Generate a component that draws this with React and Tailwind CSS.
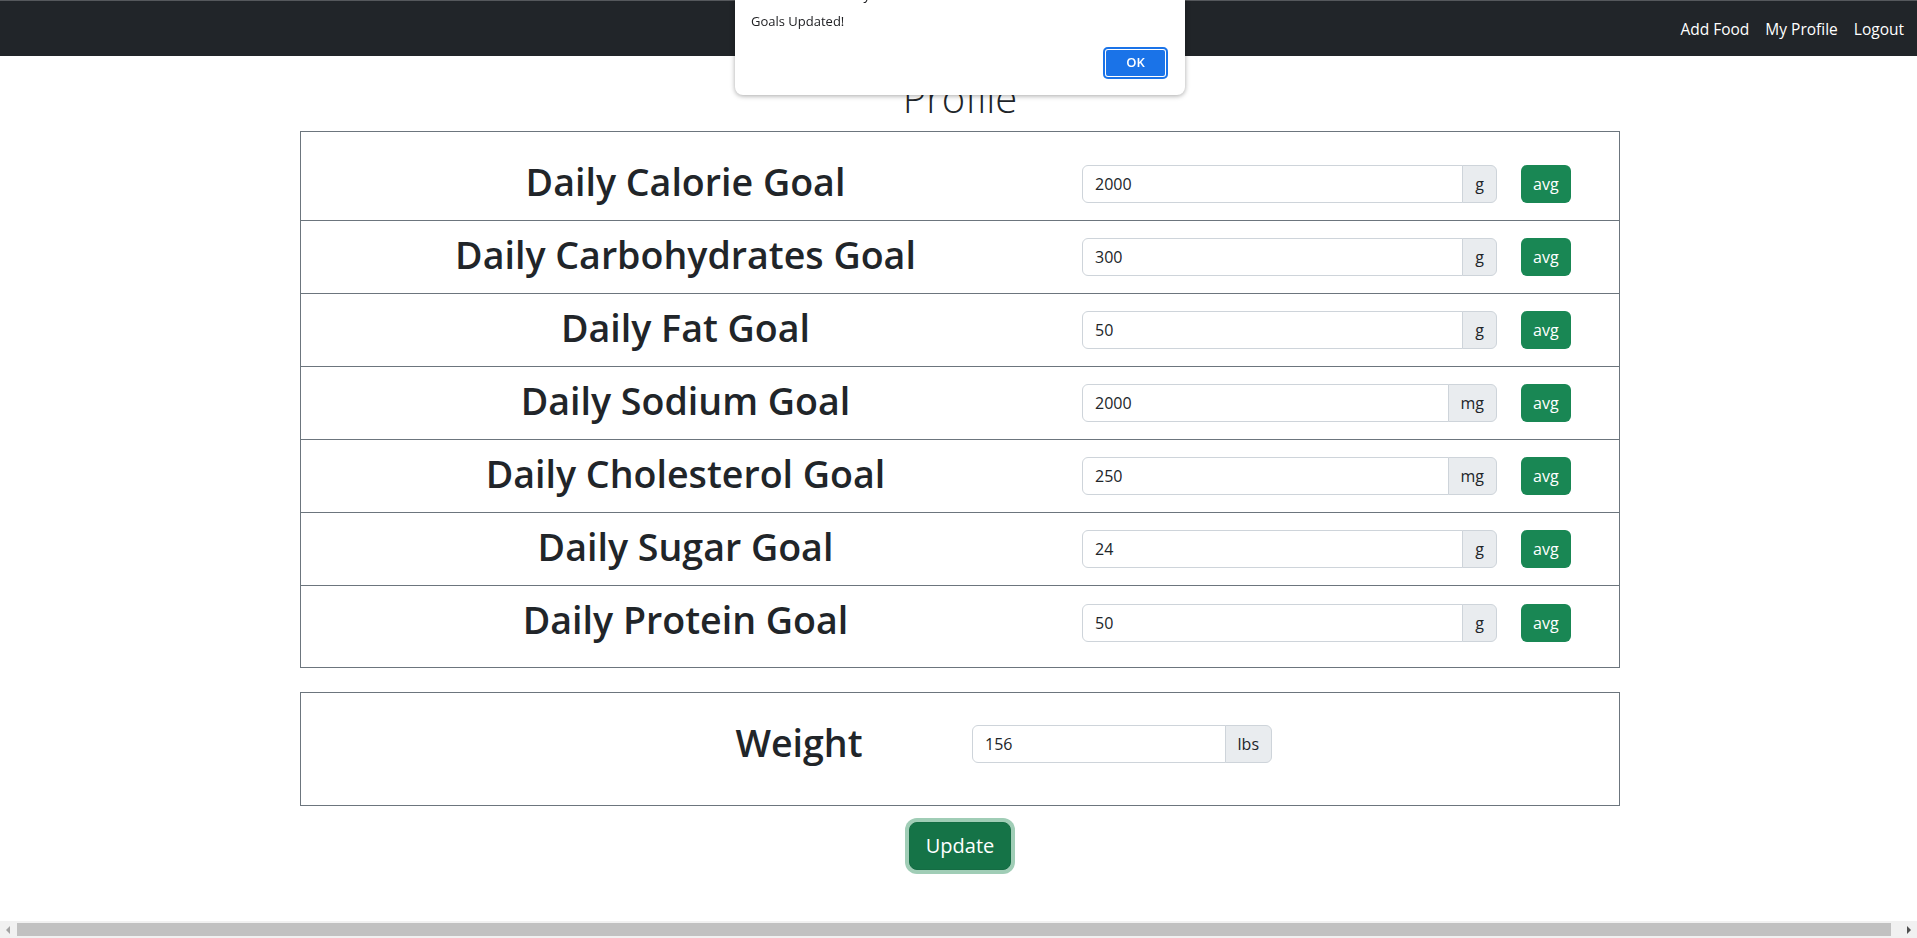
import React from "react";

const goals = [
  { label: "Daily Calorie Goal", value: "2000", unit: "g" },
  { label: "Daily Carbohydrates Goal", value: "300", unit: "g" },
  { label: "Daily Fat Goal", value: "50", unit: "g" },
  { label: "Daily Sodium Goal", value: "2000", unit: "mg" },
  { label: "Daily Cholesterol Goal", value: "250", unit: "mg" },
  { label: "Daily Sugar Goal", value: "24", unit: "g" },
  { label: "Daily Protein Goal", value: "50", unit: "g" },
];

function InputGroup({ value, unit, width }) {
  return (
    <div className={`flex h-[38px] ${width}`}>
      <input
        readOnly
        value={value}
        className="min-w-0 flex-1 rounded-l-[6px] border border-[#ced4da] bg-white px-3 text-[16px] leading-6 text-[#212529] outline-none"
      />
      <span className="-ml-px flex items-center rounded-r-[6px] border border-[#ced4da] bg-[#e9ecef] px-3 text-[16px] leading-6 text-[#212529]">
        {unit}
      </span>
    </div>
  );
}

export default function App() {
  return (
    <div className="relative flex h-screen w-full flex-col overflow-hidden bg-white font-['Open_Sans',sans-serif] text-[#212529]">
      <div className="flex-1 overflow-hidden">
        <div className="w-[1920px]">
          <nav className="flex h-[56px] items-center justify-end border-t border-[#55585c] bg-[#212529] pr-2">
            <a className="px-2 text-[15.5px] leading-6 text-white">Add Food</a>
            <a className="px-2 text-[15.5px] leading-6 text-white">My Profile</a>
            <a className="px-2 text-[15.5px] leading-6 text-white">Logout</a>
          </nav>

          <main className="flex flex-col items-center">
            <h1 className="mb-[9px] mt-[18px] text-[40px] font-light leading-[48px]">Profile</h1>

            <div className="w-[1320px] border border-[#6c757d] pb-2 pt-4">
              {goals.map((g, i) => (
                <div
                  key={g.label}
                  className={`flex h-[73px] items-center ${i < goals.length - 1 ? "border-b border-[#6c757d]" : "h-[72px]"}`}
                >
                  <div className="w-[769px] pb-[5px] text-center text-[37.6px] font-semibold leading-[48px]">{g.label}</div>
                  <div className="ml-3">
                    <InputGroup value={g.value} unit={g.unit} width="w-[415px]" />
                  </div>
                  <button className="ml-6 h-[38px] rounded-[6px] bg-[#198754] px-3 text-[16px] leading-6 text-white">
                    avg
                  </button>
                </div>
              ))}
            </div>

            <div className="mt-6 w-[1320px] border border-[#6c757d] pb-[42px] pt-[32px]">
              <div className="flex h-[38px] items-center pl-[337px]">
                <div className="w-[322px] pb-[3px] text-center text-[37.6px] font-semibold leading-[48px]">Weight</div>
                <div className="ml-3">
                  <InputGroup value="156" unit="lbs" width="w-[300px]" />
                </div>
              </div>
            </div>

            <button className="mt-4 h-[48px] rounded-[8px] border border-[#146c43] bg-[#157347] px-4 text-[20px] leading-[30px] text-white shadow-[0_0_0_4px_#a0cdb6]">
              Update
            </button>
          </main>
        </div>
      </div>

      <div className="flex h-[17px] items-center bg-[#f1f1f1]">
        <div className="flex h-[17px] w-[17px] items-center justify-center">
          <svg width="5" height="8" viewBox="0 0 5 8">
            <path d="M4 0 L0 4 L4 8 Z" fill="#a3a3a3" />
          </svg>
        </div>
        <div className="mr-[9px] h-[13px] flex-1 bg-[#c1c1c1]" />
        <div className="flex h-[17px] w-[17px] items-center justify-center">
          <svg width="5" height="8" viewBox="0 0 5 8">
            <path d="M1 0 L5 4 L1 8 Z" fill="#505050" />
          </svg>
        </div>
      </div>

      <div className="fixed left-[735px] top-[-30px] w-[450px] rounded-[8px] bg-white px-4 pb-4 pt-4 shadow-[0_1px_5px_rgba(0,0,0,0.35)]">
        <div className="text-[14px] font-medium leading-4 text-[#202124]">localhost:3000 says</div>
        <div className="mt-[11px] text-[13px] leading-4 text-[#202124]">Goals Updated!</div>
        <div className="mt-[18px] flex justify-end pr-px">
          <button className="h-[32px] w-[65px] rounded-[5px] bg-[#1a73e8] text-[13px] font-semibold text-white shadow-[inset_0_0_0_2px_#1a73e8,inset_0_0_0_3px_#ffffff]">
            OK
          </button>
        </div>
      </div>
    </div>
  );
}
